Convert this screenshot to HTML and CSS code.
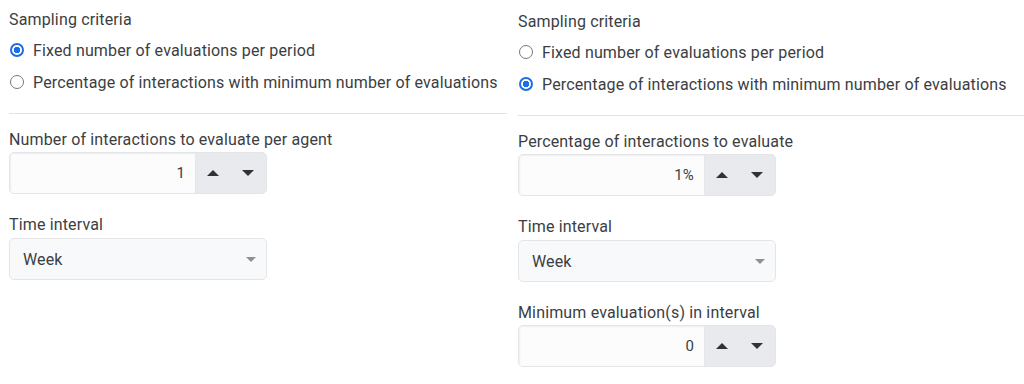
FILE: index.html
```html
<!DOCTYPE html>
<html lang="en">
<head>
    <meta charset="UTF-8">
    <meta name="viewport" content="width=device-width, initial-scale=1.0">
    <title>Sampling settings</title>
    <link rel="stylesheet" href="styles.css">
</head>
<body>
    <div class="panels">
        <!-- fixed number mode -->
        <div class="panel panel-left">
            <div class="title">Sampling criteria</div>
            <div class="radio-row">
                <span class="radio checked"></span>
                <span>Fixed number of evaluations per period</span>
            </div>
            <div class="radio-row">
                <span class="radio"></span>
                <span>Percentage of interactions with minimum number of evaluations</span>
            </div>
            <div class="divider"></div>

            <div class="field first">
                <div class="label">Number of interactions to evaluate per agent</div>
                <div class="spinner">
                    <div class="spinner-value">1</div>
                    <div class="spinner-btns">
                        <span class="arrow up"></span>
                        <span class="arrow down"></span>
                    </div>
                </div>
            </div>

            <div class="field">
                <div class="label">Time interval</div>
                <div class="select">
                    <span>Week</span>
                    <span class="caret"></span>
                </div>
            </div>
        </div>

        <!-- percentage mode -->
        <div class="panel panel-right">
            <div class="title">Sampling criteria</div>
            <div class="radio-row">
                <span class="radio"></span>
                <span>Fixed number of evaluations per period</span>
            </div>
            <div class="radio-row">
                <span class="radio checked"></span>
                <span>Percentage of interactions with minimum number of evaluations</span>
            </div>
            <div class="divider"></div>

            <div class="field first">
                <div class="label">Percentage of interactions to evaluate</div>
                <div class="spinner">
                    <div class="spinner-value">1%</div>
                    <div class="spinner-btns">
                        <span class="arrow up"></span>
                        <span class="arrow down"></span>
                    </div>
                </div>
            </div>

            <div class="field">
                <div class="label">Time interval</div>
                <div class="select">
                    <span>Week</span>
                    <span class="caret"></span>
                </div>
            </div>

            <div class="field">
                <div class="label">Minimum evaluation(s) in interval</div>
                <div class="spinner">
                    <div class="spinner-value">0</div>
                    <div class="spinner-btns">
                        <span class="arrow up"></span>
                        <span class="arrow down"></span>
                    </div>
                </div>
            </div>
        </div>
    </div>
</body>
</html>
```

FILE: styles.css
```css
body, html {
    margin: 0;
    padding: 0;
    background-color: #ffffff;
    font-family: Roboto, "Liberation Sans", Arial, sans-serif;
    font-size: 16px;
    letter-spacing: 0.15px;
    color: #3b3e43;
}
.panels {
    display: flex;
    gap: 11px;
    padding-left: 9px;
}
.panel {
    padding-top: 8px;
}
.panel-left {
    width: 498px;
}
.panel-right {
    flex: 1;
    padding-top: 10px;
}
.title {
    line-height: 24px;
    margin-bottom: 2px;
}
.radio-row {
    display: flex;
    align-items: center;
    height: 32px;
    gap: 9px;
    white-space: nowrap;
}
.radio {
    box-sizing: border-box;
    width: 14px;
    height: 14px;
    margin-left: 1px;
    border-radius: 50%;
    border: 1.5px solid #77787c;
    flex-shrink: 0;
}
.radio.checked {
    border: 2px solid #1a6fe8;
    background: radial-gradient(circle, #1a6fe8 0 3px, #ffffff 3.5px);
}
.divider {
    height: 1px;
    margin-top: 15px;
    background-color: #e2e3e6;
}
.field {
    margin-top: 19px;
    width: 258px;
}
.field.first {
    margin-top: 14px;
}
.label {
    line-height: 24px;
    white-space: nowrap;
}
.spinner {
    box-sizing: border-box;
    display: flex;
    height: 42px;
    border: 1px solid #e4e5e9;
    border-radius: 5px;
    background-color: #e9eaee;
    overflow: hidden;
}
.spinner-value {
    box-sizing: border-box;
    width: 186px;
    display: flex;
    align-items: center;
    justify-content: flex-end;
    padding-right: 10px;
    font-size: 15px;
    background-color: #fcfcfd;
    border-right: 1px solid #e6e7ea;
    box-shadow: inset 1px 1px 2px rgba(0, 0, 0, 0.06);
}
.spinner-btns {
    flex: 1;
    display: flex;
    align-items: center;
    gap: 23px;
    padding-left: 11px;
}
.arrow {
    width: 0;
    height: 0;
    border-left: 6px solid transparent;
    border-right: 6px solid transparent;
}
.arrow.up {
    border-bottom: 6px solid #2f3236;
}
.arrow.down {
    border-top: 6px solid #2f3236;
}
.select {
    box-sizing: border-box;
    display: flex;
    align-items: center;
    justify-content: space-between;
    height: 42px;
    margin-top: 1px;
    padding: 0 10px 0 13px;
    border: 1px solid #e4e5e9;
    border-radius: 5px;
    background-color: #f8f9fb;
}
.caret {
    width: 0;
    height: 0;
    border-left: 5px solid transparent;
    border-right: 5px solid transparent;
    border-top: 5px solid #8e9095;
}
```
